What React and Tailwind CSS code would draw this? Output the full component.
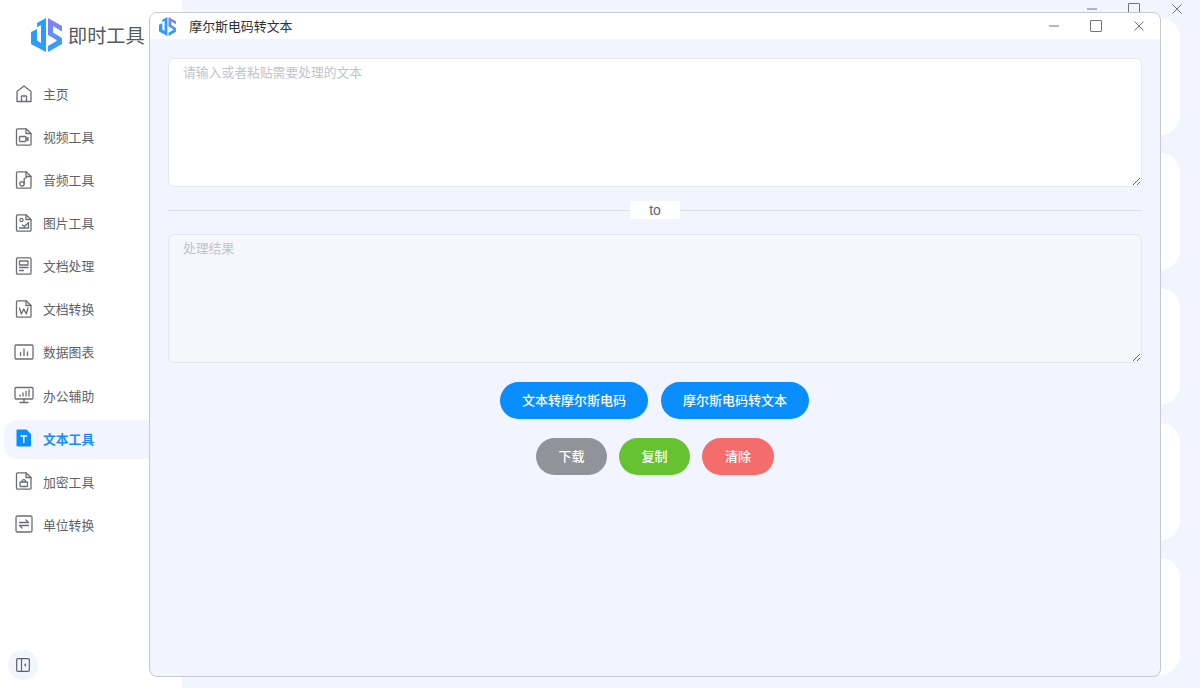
import React from "react";

const font = { fontFamily: '"Noto Sans CJK SC", "Noto Sans", sans-serif' };

function Logo({ size }) {
  return (
    <svg width={(size * 31) / 34} height={size} viewBox="0 0 31 34" fill="none">
      <defs>
        <linearGradient id={`logoJ${size}`} x1="0" y1="0" x2="0" y2="1">
          <stop offset="0" stopColor="#1fa2ff" />
          <stop offset="1" stopColor="#2f9bff" />
        </linearGradient>
        <linearGradient id={`logoS${size}`} x1="0" y1="0" x2="0" y2="1">
          <stop offset="0" stopColor="#8b7cf6" />
          <stop offset="0.5" stopColor="#5f8ffb" />
          <stop offset="1" stopColor="#1fa2ff" />
        </linearGradient>
      </defs>
      <path d="M15 0V34L0 26V14L6 11V22.500L10 25V7L6 9.200V5z" fill={`url(#logoJ${size})`} />
      <path d="M17 0L31 8V13.500L22 8V14.500L31 20V26L17 34V28L25.500 23V22L17 17z" fill={`url(#logoS${size})`} />
    </svg>
  );
}

const iconProps = {
  width: 18,
  height: 18,
  viewBox: "0 0 18 18",
  fill: "none",
  stroke: "#6b6e73",
  strokeWidth: 1.3,
  strokeLinejoin: "round",
  strokeLinecap: "round",
};

const docPath = "M2.500 0.800H11L16 5.500V16.200a1 1 0 0 1 -1 1H2.500a1 1 0 0 1 -1 -1V1.800a1 1 0 0 1 1 -1z";
const foldPath = "M11 0.800V5.500H16";

const icons = {
  home: (
    <svg {...iconProps}>
      <path d="M9 1L16 6.500V16.500H2V6.500z" />
      <path d="M6.500 16.500V11h5v5.500" />
    </svg>
  ),
  video: (
    <svg {...iconProps}>
      <path d={docPath} />
      <path d={foldPath} />
      <rect x="4.500" y="8.500" width="6.500" height="5" rx="0.800" />
      <path d="M11 10.500l2 -1v3l-2 -1" />
    </svg>
  ),
  audio: (
    <svg {...iconProps}>
      <path d={docPath} />
      <path d={foldPath} />
      <circle cx="7" cy="12.800" r="2.200" />
      <path d="M9.200 12.800V7.500l2.300 -0.800" />
    </svg>
  ),
  image: (
    <svg {...iconProps}>
      <path d={docPath} />
      <path d={foldPath} />
      <circle cx="6.500" cy="6" r="1.600" />
      <path d="M4.500 14h9V8.500L9.500 12.500L7.500 11" />
    </svg>
  ),
  doc: (
    <svg {...iconProps}>
      <rect x="1.500" y="0.800" width="14.500" height="16.400" rx="1" />
      <rect x="4.500" y="4" width="8.500" height="4" />
      <path d="M4.500 10.500h8.500M4.500 13.500h4" />
    </svg>
  ),
  word: (
    <svg {...iconProps}>
      <path d={docPath} />
      <path d={foldPath} />
      <path d="M4.500 8l1.800 6L8.800 9l2.500 5L13 8" />
    </svg>
  ),
  chart: (
    <svg {...iconProps} width={20} viewBox="0 0 20 18">
      <rect x="1" y="2" width="18" height="14" rx="1" />
      <path d="M6.500 12.500V9.500M10 12.500V6M13.500 12.500V9" />
    </svg>
  ),
  office: (
    <svg {...iconProps} width={20} viewBox="0 0 20 18">
      <rect x="1" y="1.500" width="18" height="11.500" rx="1" />
      <path d="M10 13v3.500M6 16.500h8M6 10V9M9 10V7M12 10V5.500M15 10V4" />
    </svg>
  ),
  text: (
    <svg width="18" height="18" viewBox="0 0 18 18" fill="none">
      <path d="M2.500 0.500h9L16 5v11.500a1 1 0 0 1 -1 1H2.500a1 1 0 0 1 -1 -1V1.500a1 1 0 0 1 1 -1z" fill="#0a8dff" />
      <path d="M6 7h5.500M8.750 7v6.500" stroke="#fff" strokeWidth="1.500" strokeLinecap="round" />
    </svg>
  ),
  lock: (
    <svg {...iconProps}>
      <path d={docPath} />
      <path d={foldPath} />
      <rect x="5" y="10" width="7.500" height="4.500" rx="0.700" />
      <path d="M7 10V9a1.800 1.800 0 0 1 3.500 0v1" />
    </svg>
  ),
  convert: (
    <svg {...iconProps}>
      <rect x="1" y="1" width="16" height="16" rx="1.500" />
      <path d="M4.500 7.500h9L11 5M13.500 10.500h-9L7 13" />
    </svg>
  ),
};

const navItems = [
  { label: "主页", icon: "home" },
  { label: "视频工具", icon: "video" },
  { label: "音频工具", icon: "audio" },
  { label: "图片工具", icon: "image" },
  { label: "文档处理", icon: "doc" },
  { label: "文档转换", icon: "word" },
  { label: "数据图表", icon: "chart" },
  { label: "办公辅助", icon: "office" },
  { label: "文本工具", icon: "text", active: true },
  { label: "加密工具", icon: "lock" },
  { label: "单位转换", icon: "convert" },
];

function WindowControls({ stroke }) {
  return (
    <div className="flex items-center">
      <svg width="12" height="12" viewBox="0 0 12 12" className="mr-[30px]">
        <path d="M1 6h10" stroke={stroke} strokeWidth="1" />
      </svg>
      <svg width="12" height="12" viewBox="0 0 12 12" className="mr-[31px]">
        <rect x="0.500" y="0.500" width="11" height="11" rx="0.500" fill="none" stroke={stroke} strokeWidth="1" />
      </svg>
      <svg width="12" height="12" viewBox="0 0 12 12">
        <path d="M1.500 1.500l9 9M10.500 1.500l-9 9" stroke={stroke} strokeWidth="1" />
      </svg>
    </div>
  );
}

function Sidebar() {
  return (
    <aside className="w-[182px] h-full shrink-0 bg-white flex flex-col">
      <div className="h-[75px] flex items-start pt-[18px] pl-[31px] gap-[6px]">
        <Logo size={34} />
        <span className="text-[19.200px] leading-[34px] text-[#555a60]">即时工具</span>
      </div>
      <nav className="flex flex-col gap-[4.100px] pl-[4px]">
        {navItems.map((item) => (
          <div
            key={item.label}
            className={`h-[39px] pb-[2px] flex items-center rounded-l-[14px] ${item.active ? "bg-[#f2f5ff] text-[#1a8cff] font-bold" : "text-[#5f6368]"}`}
          >
            <span className="w-[39px] flex justify-center">{icons[item.icon]}</span>
            <span className="text-[12.800px]">{item.label}</span>
          </div>
        ))}
      </nav>
      <div className="mt-auto mb-[8px] ml-[8px] w-[30px] h-[30px] rounded-full bg-[#f2f5ff] flex items-center justify-center">
        <svg width="14" height="14" viewBox="0 0 14 14" fill="none" stroke="#5f6368" strokeWidth="1.200">
          <rect x="0.700" y="0.700" width="12.600" height="12.600" rx="1" />
          <path d="M5.500 0.700v12.600" />
          <path d="M10 5l-2 2 2 2z" fill="#5f6368" stroke="none" />
        </svg>
      </div>
    </aside>
  );
}

function TextBox({ placeholder, disabled }) {
  return (
    <textarea
      disabled={disabled}
      placeholder={placeholder}
      className={`block w-full h-[129px] rounded-[6px] border border-[#e4e7ed] px-[14px] py-[3px] text-[12.800px] leading-[20px] outline-none placeholder:text-[#c0c4cc] ${disabled ? "bg-[#f5f7fa]" : "bg-white"}`}
    />
  );
}

function PillButton({ label, className }) {
  return (
    <button className={`h-[37px] pb-[2px] rounded-full text-white text-[13px] font-medium ${className}`}>
      {label}
    </button>
  );
}

function ToolWindow() {
  return (
    <div className="absolute left-[149px] top-[12px] w-[1012px] h-[665px] rounded-[8px] border border-[#c6c9d2] bg-[#f2f5ff] overflow-hidden flex flex-col">
      <div className="h-[26px] shrink-0 bg-white flex items-center pl-[9px] pr-[15px]">
        <Logo size={19} />
        <span className="ml-[13px] text-[12.900px] text-[#303133]">摩尔斯电码转文本</span>
        <div className="ml-auto">
          <WindowControls stroke="#70747a" />
        </div>
      </div>
      <div className="pt-[19px] px-[18px]">
        <TextBox placeholder="请输入或者粘贴需要处理的文本" />
        <div className="relative h-[47px] flex items-center justify-center">
          <div className="w-full h-px bg-[#dcdfe6]" />
          <span className="absolute top-[14px] w-[50px] h-[18px] bg-white text-center text-[14px] leading-[18px] text-[#5a6270] font-['Liberation_Sans',sans-serif]">
            to
          </span>
        </div>
        <TextBox placeholder="处理结果" disabled />
        <div className="flex justify-center gap-[13px] mt-[19px] pr-[1px]">
          <PillButton label="文本转摩尔斯电码" className="w-[148px] bg-[#0a8dff]" />
          <PillButton label="摩尔斯电码转文本" className="w-[148px] bg-[#0a8dff]" />
        </div>
        <div className="flex justify-center gap-[12px] mt-[19px]">
          <PillButton label="下载" className="w-[71px] bg-[#909399]" />
          <PillButton label="复制" className="w-[71px] bg-[#67c232]" />
          <PillButton label="清除" className="w-[72px] bg-[#f56c6c]" />
        </div>
      </div>
    </div>
  );
}

export default function App() {
  return (
    <div className="relative w-[1200px] h-[688px] overflow-hidden bg-[#f2f5ff] flex" style={font}>
      <Sidebar />
      <main className="flex-1 relative pt-[18px] pr-[20px]">
        <div className="absolute right-[17px] top-[3px]">
          <WindowControls stroke="#70747a" />
        </div>
        <div className="flex flex-col gap-[18px]">
          {[1, 2, 3, 4, 5].map((n) => (
            <div key={n} className="h-[117px] rounded-[20px] bg-white" />
          ))}
        </div>
      </main>
      <ToolWindow />
    </div>
  );
}
